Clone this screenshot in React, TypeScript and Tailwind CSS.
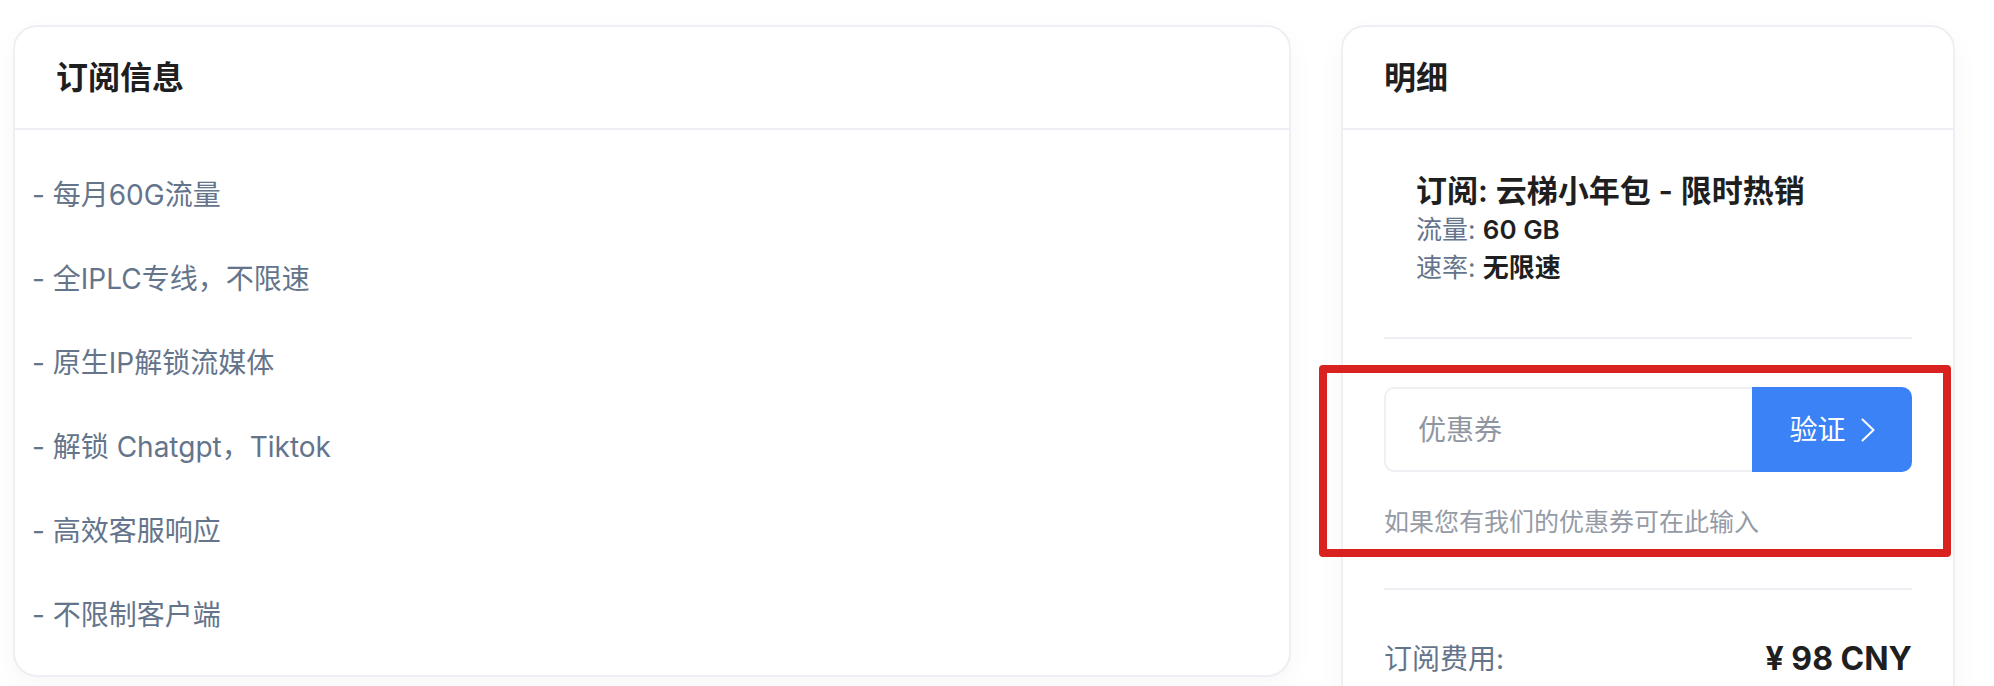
const features = [
  '- 每月60G流量',
  '- 全IPLC专线，不限速',
  '- 原生IP解锁流媒体',
  '- 解锁 Chatgpt，Tiktok',
  '- 高效客服响应',
  '- 不限制客户端',
];

function Card({ title, className, children }: { title: string; className?: string; children: React.ReactNode }) {
  return (
    <div className={`bg-white border-2 border-[#eeeef4] rounded-[24px] shadow-[0_10px_30px_rgba(30,30,60,0.035)] ${className ?? ''}`}>
      <div className="h-[103px] flex items-center border-b-2 border-[#eeeef4] pl-[41px]">
        <h2 className="text-[32px] font-semibold text-[#1f1f1f] leading-[40px]">{title}</h2>
      </div>
      {children}
    </div>
  );
}

export default function App() {
  return (
    <div className="min-h-screen bg-white pl-[13px] pr-[39px] pt-[25px] flex items-start gap-[50px] font-['Inter','Noto_Sans_CJK_SC',sans-serif]">
      {/* Left: subscription info */}
      <Card title="订阅信息" className="flex-1 min-w-0">
        <div className="pt-[23px] pb-[18px] pl-[17px]">
          {features.map(f => (
            <div key={f} className="h-[84px] flex items-center text-[28px] text-[#64748b]">
              {f}
            </div>
          ))}
        </div>
      </Card>

      {/* Right: details */}
      <Card title="明细" className="w-[614px] flex-shrink-0">
        <div className="px-[41px] pb-[60px]">
          {/* Plan */}
          <div className="pt-[41px] pb-[50px] pl-[32px] border-b-2 border-[#eeeef4]">
            <p className="text-[31px] leading-[40px] font-semibold text-[#1f1f1f]">订阅: 云梯小年包 - 限时热销</p>
            <p className="text-[26px] leading-[38px]">
              <span className="text-[#64748b]">流量: </span>
              <span className="font-semibold text-[#1f1f1f]">60 GB</span>
            </p>
            <p className="text-[26px] leading-[38px]">
              <span className="text-[#64748b]">速率: </span>
              <span className="font-semibold text-[#1f1f1f]">无限速</span>
            </p>
          </div>

          {/* Coupon */}
          <div className="relative mt-[48px] pb-[48px] border-b-2 border-[#eeeef4]">
            <div className="flex h-[85px]">
              <input
                type="text"
                placeholder="优惠券"
                className="flex-1 min-w-0 border-2 border-r-0 border-[#efeff4] rounded-l-[10px] pl-[32px] text-[28px] outline-none placeholder:text-[#9096a0]"
              />
              <button
                type="button"
                className="w-[160px] flex items-center justify-center bg-[#3b82f6] text-white text-[28px] rounded-r-[10px]"
              >
                验证
                <svg width="14" height="24" viewBox="0 0 14 24" className="ml-[15px]" fill="none" stroke="currentColor" strokeWidth="2" strokeLinecap="round" strokeLinejoin="round">
                  <polyline points="1.5,1.5 12.5,12 1.5,22.5" />
                </svg>
              </button>
            </div>
            <p className="mt-[32px] text-[25px] leading-[36px] text-[#959ba5]">如果您有我们的优惠券可在此输入</p>
            {/* annotation box */}
            <div className="absolute -left-[65px] -top-[22px] w-[632px] h-[192px] border-[8px] border-[#d9221f] rounded-[4px] pointer-events-none" />
          </div>

          {/* Total */}
          <div className="mt-[49px] flex items-center justify-between">
            <span className="text-[28px] leading-[40px] text-[#64748b]">订阅费用:</span>
            <span className="text-[32px] leading-[40px] font-bold text-[#1f1f1f]">¥ 98 CNY</span>
          </div>
        </div>
      </Card>
    </div>
  );
}
